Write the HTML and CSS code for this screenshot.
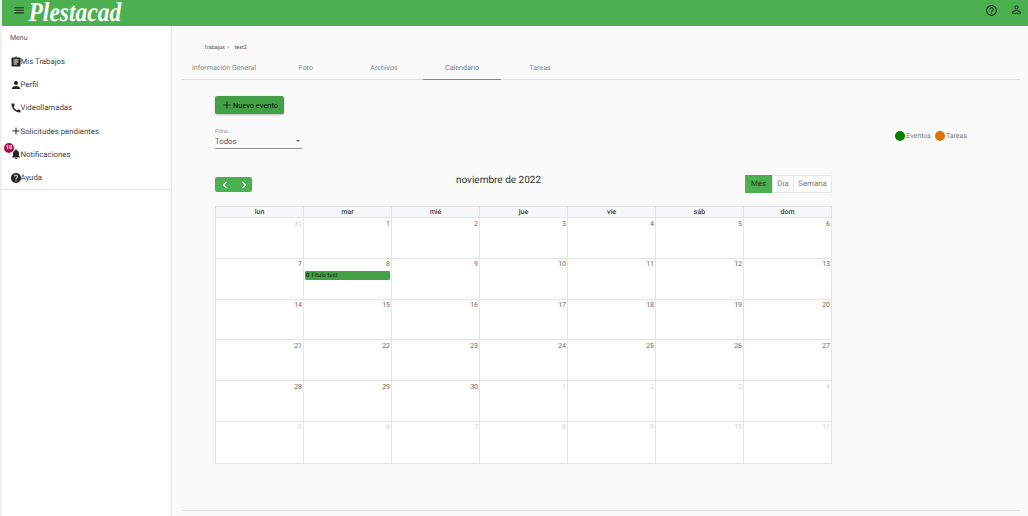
FILE: index.html
```html
<!DOCTYPE html>
<html lang="es">
<head>
    <meta charset="UTF-8">
    <title>Plestacad</title>
    <link rel="stylesheet" href="styles.css">
</head>
<body>
    <header class="toolbar">
        <svg class="menu-icon" viewBox="0 0 24 24"><path d="M3 18h18v-2H3v2zm0-5h18v-2H3v2zm0-7v2h18V6H3z"/></svg>
        <span class="logo">Plestacad</span>
        <div class="toolbar-right">
            <svg class="top-icon" viewBox="0 0 24 24"><path d="M11 18h2v-2h-2v2zm1-16C6.48 2 2 6.48 2 12s4.48 10 10 10 10-4.48 10-10S17.52 2 12 2zm0 18c-4.41 0-8-3.59-8-8s3.59-8 8-8 8 3.59 8 8-3.59 8-8 8zm0-14c-2.21 0-4 1.79-4 4h2c0-1.1.9-2 2-2s2 .9 2 2c0 2-3 1.75-3 5h2c0-2.25 3-2.5 3-5 0-2.21-1.79-4-4-4z"/></svg>
            <svg class="top-icon" viewBox="0 0 24 24"><path d="M12 5.9c1.16 0 2.1.94 2.1 2.1s-.94 2.1-2.1 2.1S9.9 9.16 9.9 8s.94-2.1 2.1-2.1m0 9c2.97 0 6.1 1.46 6.1 2.1v1.1H5.9V17c0-.64 3.13-2.1 6.1-2.1M12 4C9.79 4 8 5.79 8 8s1.79 4 4 4 4-1.79 4-4-1.79-4-4-4zm0 9c-2.67 0-8 1.34-8 4v3h16v-3c0-2.66-5.33-4-8-4z"/></svg>
        </div>
    </header>

    <div class="layout">
        <nav class="sidebar">
            <div class="menu-title">Menu</div>
            <ul class="menu">
                <li><svg viewBox="0 0 24 24"><path d="M19 3h-4.18C14.4 1.84 13.3 1 12 1c-1.3 0-2.4.84-2.82 2H5c-1.1 0-2 .9-2 2v14c0 1.1.9 2 2 2h14c1.1 0 2-.9 2-2V5c0-1.1-.9-2-2-2zm-7 0c.55 0 1 .45 1 1s-.45 1-1 1-1-.45-1-1 .45-1 1-1zm2 14H7v-2h7v2zm3-4H7v-2h10v2zm0-4H7V7h10v2z"/></svg>Mis Trabajos</li>
                <li><svg viewBox="0 0 24 24"><path d="M12 12c2.21 0 4-1.79 4-4s-1.79-4-4-4-4 1.79-4 4 1.79 4 4 4zm0 2c-2.67 0-8 1.34-8 4v2h16v-2c0-2.66-5.33-4-8-4z"/></svg>Perfil</li>
                <li><svg viewBox="0 0 24 24"><path d="M20.01 15.38c-1.23 0-2.42-.2-3.53-.56-.35-.12-.74-.03-1.01.24l-1.57 1.97c-2.83-1.35-5.48-3.9-6.89-6.83l1.95-1.66c.27-.28.35-.67.24-1.02-.37-1.11-.56-2.3-.56-3.53 0-.54-.45-.99-.99-.99H4.19C3.65 3 3 3.24 3 3.99 3 13.28 10.73 21 20.01 21c.71 0 .99-.63.99-1.18v-3.45c0-.54-.45-.99-.99-.99z"/></svg>Videollamadas</li>
                <li><svg viewBox="0 0 24 24"><path d="M19 13h-6v6h-2v-6H5v-2h6V5h2v6h6v2z"/></svg>Solicitudes pendientes</li>
                <li class="has-badge"><span class="badge">10</span><svg viewBox="0 0 24 24"><path d="M12 22c1.1 0 2-.9 2-2h-4c0 1.1.89 2 2 2zm6-6v-5c0-3.07-1.64-5.64-4.5-6.32V4c0-.83-.67-1.5-1.5-1.5s-1.5.67-1.5 1.5v.68C7.63 5.36 6 7.92 6 11v5l-2 2v1h16v-1l-2-2z"/></svg>Notificaciones</li>
                <li><svg viewBox="0 0 24 24"><path d="M12 2C6.48 2 2 6.48 2 12s4.48 10 10 10 10-4.48 10-10S17.52 2 12 2zm1 17h-2v-2h2v2zm2.07-7.75l-.9.92C13.45 12.9 13 13.5 13 15h-2v-.5c0-1.1.45-2.1 1.17-2.83l1.24-1.26c.37-.36.59-.86.59-1.41 0-1.1-.9-2-2-2s-2 .9-2 2H8c0-2.21 1.79-4 4-4s4 1.79 4 4c0 .88-.36 1.68-.93 2.25z"/></svg>Ayuda</li>
            </ul>
        </nav>

        <main class="main">
            <div class="breadcrumb"><span>Trabajos</span><span class="sep">&gt;</span><span>test2</span></div>

            <div class="tabs">
                <a class="tab first">Información General</a>
                <a class="tab">Foro</a>
                <a class="tab">Archivos</a>
                <a class="tab active">Calendario</a>
                <a class="tab">Tareas</a>
            </div>

            <div class="content">
                <button class="new-btn"><svg viewBox="0 0 24 24"><path d="M19 13h-6v6h-2v-6H5v-2h6V5h2v6h6v2z"/></svg>Nuevo evento</button>

                <div class="filter-row">
                    <div class="filter">
                        <label>Filtrar...</label>
                        <div class="select"><span>Todos</span><i class="arrow"></i></div>
                    </div>
                    <div class="legend">
                        <i class="dot green"></i><span>Eventos</span>
                        <i class="dot orange"></i><span>Tareas</span>
                    </div>
                </div>

                <div class="cal">
                    <div class="cal-head">
                        <div class="nav-btns">
                            <svg viewBox="0 0 24 24"><path d="M15.41 7.41 14 6l-6 6 6 6 1.41-1.41L10.83 12z"/></svg>
                            <svg viewBox="0 0 24 24"><path d="M10 6 8.59 7.41 13.17 12l-4.58 4.59L10 18l6-6z"/></svg>
                        </div>
                        <h2>noviembre de 2022</h2>
                        <div class="views">
                            <span class="view active">Mes</span>
                            <span class="view dia">Día</span>
                            <span class="view semana">Semana</span>
                        </div>
                    </div>

                    <div class="cal-grid">
                        <div class="dow">lun</div><div class="dow">mar</div><div class="dow">mié</div><div class="dow">jue</div><div class="dow">vie</div><div class="dow">sáb</div><div class="dow">dom</div>

                        <div class="day out">31</div><div class="day">1</div><div class="day">2</div><div class="day">3</div><div class="day">4</div><div class="day">5</div><div class="day">6</div>
                        <div class="day">7</div><div class="day">8<div class="event"><b>0</b> Título test</div></div><div class="day">9</div><div class="day">10</div><div class="day">11</div><div class="day">12</div><div class="day">13</div>
                        <div class="day">14</div><div class="day">15</div><div class="day">16</div><div class="day">17</div><div class="day">18</div><div class="day">19</div><div class="day">20</div>
                        <div class="day">21</div><div class="day">22</div><div class="day">23</div><div class="day">24</div><div class="day">25</div><div class="day">26</div><div class="day">27</div>
                        <div class="day">28</div><div class="day">29</div><div class="day">30</div><div class="day out">1</div><div class="day out">2</div><div class="day out">3</div><div class="day out">4</div>
                        <div class="day out">5</div><div class="day out">6</div><div class="day out">7</div><div class="day out">8</div><div class="day out">9</div><div class="day out">10</div><div class="day out">11</div>
                    </div>
                </div>
            </div>

            <div class="footer-line"></div>
        </main>
    </div>
</body>
</html>
```

FILE: styles.css
```css
* {
    box-sizing: border-box;
}

html, body {
    height: 100%;
}

body {
    display: flex;
    flex-direction: column;
    margin: 0;
    padding-left: 2px;
    overflow: hidden;
    background: #f0f0f0;
    font-family: Roboto, Arial, sans-serif;
    text-rendering: geometricPrecision;
    color: #333;
}

.toolbar {
    display: flex;
    align-items: center;
    flex: 0 0 26px;
    height: 26px;
    padding: 0 5px 0 10.5px;
    background: #4caf50;
    color: #1c3a1d;
}

.menu-icon {
    width: 12.5px;
    height: 12.5px;
    margin: -5px 0 0;
    fill: #1c2b1c;
}

.logo {
    margin-left: 3.5px;
    font-family: "Liberation Serif", serif;
    font-size: 23.5px;
    font-style: italic;
    font-weight: bold;
    line-height: 24px;
    color: #fff;
    transform: scaleY(1.15);
}

.toolbar-right {
    display: flex;
    align-items: center;
    gap: 12.5px;
    margin: -5px 0 0 auto;
}

.top-icon {
    width: 13px;
    height: 13px;
    fill: #1b3a1c;
}

.top-icon:last-child {
    margin-top: -2px;
}

.layout {
    display: flex;
    flex: 1;
    min-height: 0;
}

.sidebar {
    flex: 0 0 170px;
    background: #fff;
    border-right: 1px solid #e6e6e6;
}

.menu-title {
    height: 23.5px;
    padding: 8px 0 0 8px;
    font-size: 7px;
    color: #555;
}

.menu {
    list-style: none;
    margin: 0;
    padding: 0;
    border-bottom: 1px solid #e4e4e4;
}

.menu li {
    position: relative;
    display: flex;
    align-items: center;
    height: 23.2px;
    padding: 1px 0 0 7.5px;
    font-size: 7.8px;
    color: #444;
}

.menu svg {
    flex: none;
    width: 12px;
    height: 12px;
    margin-right: -1px;
    fill: #222;
}

.badge {
    position: absolute;
    left: 2px;
    top: 0.5px;
    width: 10px;
    height: 10px;
    border-radius: 50%;
    background: #a90c45;
    color: #fff;
    font-size: 5.5px;
    font-weight: bold;
    line-height: 10px;
    text-align: center;
    letter-spacing: 0;
}

.main {
    position: relative;
    flex: 1;
    min-width: 0;
    padding: 0 8px 0 9px;
    background: #fafafa;
}

.breadcrumb {
    display: flex;
    height: 30px;
    padding: 19px 0 0 23px;
    font-size: 5.4px;
    color: #444;
}

.sep {
    margin: 0 5px 0 2px;
    color: #aaa;
}

.tabs {
    display: flex;
    height: 24px;
    border-bottom: 1px solid #e0e0e0;
}

.tab {
    width: 78px;
    height: 24px;
    padding-top: 6px;
    font-size: 7.1px;
    line-height: 12px;
    text-align: center;
    color: #858585;
}

.tab.first {
    width: 86px;
}

.tab.active {
    border-bottom: 1px solid #4caf50;
    color: #777;
}

.content {
    padding: 16px 0 0 34px;
}

.new-btn {
    display: flex;
    align-items: center;
    justify-content: center;
    width: 69px;
    height: 18px;
    padding: 0;
    border: 0;
    border-radius: 2px;
    background: #43a047;
    box-shadow: 0 1px 2px rgba(0, 0, 0, 0.25);
    font-family: inherit;
    font-size: 7.4px;
    font-weight: 500;
    color: #143016;
}

.new-btn svg {
    width: 12px;
    height: 12px;
    fill: #143016;
}

.filter-row {
    display: flex;
    justify-content: space-between;
    height: 61px;
    padding-top: 15px;
    padding-right: 53px;
}

.filter {
    width: 87px;
}

.filter label {
    display: block;
    height: 7px;
    font-size: 5.2px;
    line-height: 7px;
    color: #999;
}

.select {
    display: flex;
    align-items: center;
    justify-content: space-between;
    height: 13px;
    padding: 0 2px 2px 0;
    border-bottom: 1px solid #8a8a8a;
    font-size: 7.8px;
    color: #555;
}

.arrow {
    width: 0;
    height: 0;
    border: 2.5px solid transparent;
    border-top-color: #666;
    border-bottom-width: 0;
}

.legend {
    display: flex;
    align-items: center;
    height: 10px;
    margin-top: 2px;
    font-size: 7px;
    color: #777;
}

.dot {
    width: 10px;
    height: 10px;
    margin-right: 1px;
    border-radius: 50%;
}

.dot.green {
    background: #008000;
}

.dot.orange {
    margin-left: 4px;
    background: #df7109;
}

.cal {
    width: 617px;
}

.cal-head {
    display: flex;
    justify-content: space-between;
    align-items: flex-start;
    height: 31px;
}

.nav-btns {
    display: flex;
    align-items: center;
    justify-content: space-between;
    width: 37px;
    height: 15px;
    margin-top: 2px;
    padding: 0 1.5px 0 2.5px;
    border-radius: 2px;
    background: #4caf50;
}

.nav-btns svg {
    width: 14px;
    height: 14px;
    fill: #fff;
}

.cal-head h2 {
    margin: 1px 0 0;
    font-size: 10px;
    font-weight: 400;
    line-height: 10px;
    color: #333;
}

.views {
    display: flex;
    height: 18px;
    border: 1px solid #e6e6e6;
    border-radius: 2px;
    background: #fff;
    font-size: 7.8px;
    color: #777;
}

.view {
    line-height: 16px;
    text-align: center;
    border-left: 1px solid #e6e6e6;
}

.view.dia {
    width: 21px;
}

.view.semana {
    width: 38px;
}

.view.active {
    width: 27px;
    margin: -1px 0 -1px -1px;
    border: 0;
    line-height: 18px;
    background: #4caf50;
    color: #1c3a1d;
}

.cal-grid {
    display: grid;
    grid-template-columns: repeat(7, 1fr);
    grid-template-rows: 11px repeat(5, 40.8px) 42px;
    border-top: 1px solid #e4e4e4;
    border-left: 1px solid #e4e4e4;
    background: #fff;
}

.dow {
    border-right: 1px solid #e4e4e4;
    border-bottom: 1px solid #e4e4e4;
    background: #f5f7f8;
    font-size: 7px;
    font-weight: 500;
    line-height: 10px;
    text-align: center;
    color: #444;
}

.day {
    padding: 1.5px 1px 0;
    border-right: 1px solid #e4e4e4;
    border-bottom: 1px solid #e4e4e4;
    font-size: 7px;
    line-height: 9px;
    text-align: right;
    color: #666;
}

.day.out {
    color: #d2d2d2;
}

.event {
    height: 9px;
    margin-top: 1.5px;
    padding-left: 1px;
    border-radius: 1px;
    background: #43a047;
    font-size: 6px;
    line-height: 9px;
    text-align: left;
    color: #173018;
}

.footer-line {
    position: absolute;
    left: 9px;
    right: 8px;
    bottom: 5px;
    border-top: 1px solid #e4e4e4;
}
```
